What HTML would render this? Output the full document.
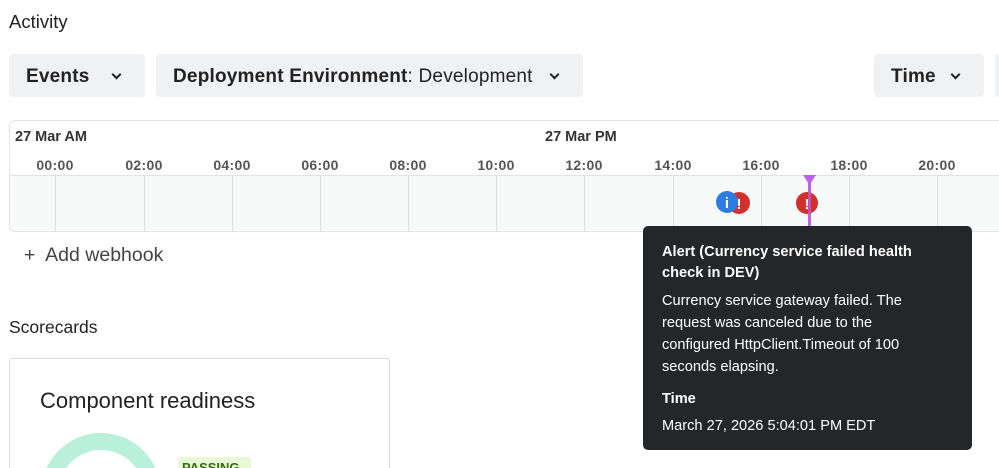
<!DOCTYPE html><html style="width:999px;height:468px;overflow:hidden"><head><style>
*{margin:0;padding:0;box-sizing:border-box}
body{width:999px;height:468px;overflow:hidden;background:#fff;font-family:"Liberation Sans",sans-serif;color:#222}
#w{position:relative;width:999px;height:468px;overflow:hidden}
.a{position:absolute;white-space:nowrap}
.btn{position:absolute;top:54px;height:43px;background:#f0f1f3;border-radius:4px;font-size:19px;font-weight:bold;line-height:45px;padding-left:17px;color:#222;letter-spacing:.2px}
.chev{position:absolute;top:17px;width:7px;height:7px;border-right:2.5px solid #222;border-bottom:2.5px solid #222;transform:rotate(45deg)}
.hl{position:absolute;top:157px;font-size:14px;font-weight:bold;color:#555;width:60px;text-align:center;letter-spacing:.3px}
.gl{position:absolute;top:175px;height:56px;width:1px;background:#ddd}
.tt{position:absolute;left:643px;top:226px;width:329px;height:224px;background:#25262a;border-radius:5px;color:#fff;font-size:14.6px;padding:15px 19px;line-height:22px}
</style></head><body><div id="w">
<div class="a" style="left:9px;top:11px;font-size:18.5px">Activity</div>
<div class="btn" style="left:9px;width:136px">Events<span class="chev" style="left:104px"></span></div>
<div class="btn" style="left:156px;width:427px">Deployment Environment<span style="font-weight:normal">: Development</span><span class="chev" style="left:395px"></span></div>
<div class="btn" style="left:874px;width:110px">Time<span class="chev" style="left:78px"></span></div>
<div class="btn" style="left:995px;width:4px;padding:0"></div>
<div style="position:absolute;left:9px;top:120px;width:1010px;height:112px;border:1px solid #e3e3e3;border-radius:6px;background:#fff;overflow:hidden">
<div style="position:absolute;left:0;top:54px;width:100%;height:58px;background:#f8f9f9;border-top:1px solid #e3e3e3"></div>
</div>
<div class="a" style="left:15px;top:129px;font-size:14.5px;font-weight:bold;color:#333">27 Mar AM</div>
<div class="a" style="left:545px;top:129px;font-size:14.5px;font-weight:bold;color:#333">27 Mar PM</div>
<div class="hl" style="left:25px">00:00</div><div class="hl" style="left:114px">02:00</div><div class="hl" style="left:202px">04:00</div><div class="hl" style="left:290px">06:00</div><div class="hl" style="left:378px">08:00</div><div class="hl" style="left:466px">10:00</div><div class="hl" style="left:554px">12:00</div><div class="hl" style="left:643px">14:00</div><div class="hl" style="left:731px">16:00</div><div class="hl" style="left:819px">18:00</div><div class="hl" style="left:907px">20:00</div>
<div class="gl" style="left:55px"></div><div class="gl" style="left:144px"></div><div class="gl" style="left:232px"></div><div class="gl" style="left:320px"></div><div class="gl" style="left:408px"></div><div class="gl" style="left:496px"></div><div class="gl" style="left:584px"></div><div class="gl" style="left:673px"></div><div class="gl" style="left:761px"></div><div class="gl" style="left:849px"></div><div class="gl" style="left:937px"></div>
<svg class="a" style="left:700px;top:170px" width="140" height="65">
<circle cx="39" cy="33" r="11" fill="#d0312d"/><text x="39" y="39" font-size="15" font-weight="bold" fill="#fff" text-anchor="middle" font-family="Liberation Sans">!</text>
<circle cx="27" cy="32" r="11" fill="#2b7de1"/><text x="27" y="38" font-size="15" font-weight="bold" fill="#fff" text-anchor="middle" font-family="Liberation Sans">i</text>
<rect x="108" y="6" width="3" height="60" fill="#c060ee"/>
<polygon points="103,5 116,5 109.5,15" fill="#c060ee"/>
<circle cx="107" cy="33" r="11" fill="#d0312d"/><text x="107" y="39" font-size="15" font-weight="bold" fill="#fff" text-anchor="middle" font-family="Liberation Sans">!</text>
<rect x="108" y="22" width="3" height="44" fill="#c060ee" opacity=".7"/>
</svg>
<div class="a" style="left:24px;top:244px;font-size:19.5px;color:#444">+&nbsp; Add webhook</div>
<div class="a" style="left:9px;top:317px;font-size:17.5px">Scorecards</div>
<div style="position:absolute;left:9px;top:358px;width:381px;height:115px;border:1px solid #ddd;border-radius:3px"></div>
<div class="a" style="left:40px;top:388px;font-size:22px;color:#222">Component readiness</div>
<div style="position:absolute;left:41px;top:433px;width:120px;height:120px;border-radius:50%;border:17px solid #b8f0db"></div>
<div class="a" style="left:178px;top:457px;width:73px;height:20px;background:#e8f9d6;border-radius:3px;font-size:13px;font-weight:bold;color:#3a6a10;padding:3px 4px">PASSING</div>
<div class="tt">
<div style="font-weight:bold;line-height:21px;margin-top:1px">Alert (Currency service failed health<br>check in DEV)</div>
<div style="margin-top:6px">Currency service gateway failed. The<br>request was canceled due to the<br>configured HttpClient.Timeout of 100<br>seconds elapsing.</div>
<div style="font-weight:bold;margin-top:10px">Time</div>
<div style="margin-top:5px">March 27, 2026 5:04:01 PM EDT</div>
</div>
</div></body></html>
